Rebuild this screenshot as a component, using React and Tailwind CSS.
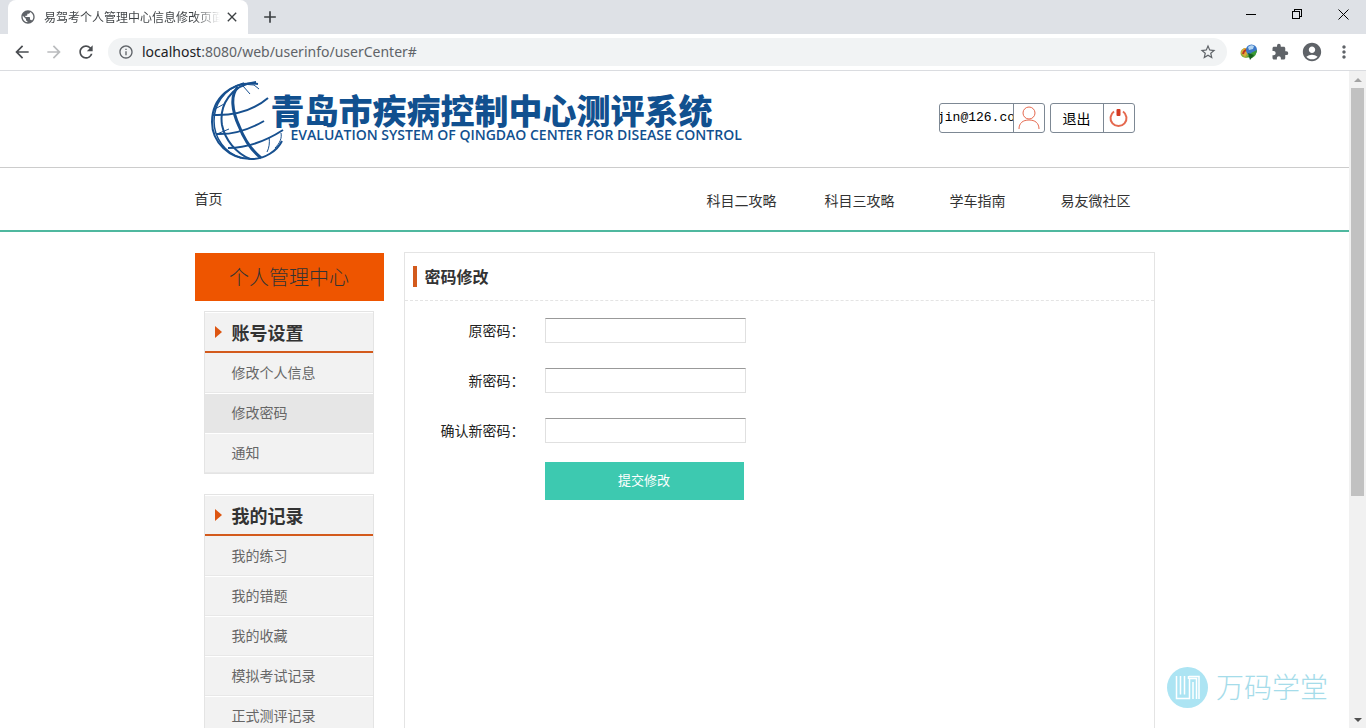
import {
  MdAccountCircle, MdAdd, MdArrowBack, MdArrowForward, MdClose, MdExtension,
  MdInfoOutline, MdMoreVert, MdPublic, MdRefresh, MdStarBorder,
} from 'react-icons/md'

const navLinks = ['科目二攻略', '科目三攻略', '学车指南', '易友微社区']

const menus = [
  { title: '账号设置', items: ['修改个人信息', '修改密码', '通知'], active: '修改密码' },
  { title: '我的记录', items: ['我的练习', '我的错题', '我的收藏', '模拟考试记录', '正式测评记录'] },
]

const fields = [
  { id: 'old-password', label: '原密码：' },
  { id: 'new-password', label: '新密码：' },
  { id: 'confirm-password', label: '确认新密码：' },
]

function TabStrip() {
  return (
    <div className="flex h-[34px] shrink-0 bg-[#dee1e6] pl-2">
      <div className="flex w-60 items-center rounded-t-lg bg-white pl-3 pr-2">
        <MdPublic size={16} className="shrink-0 text-[#5f6368]" />
        <span className="ml-2 w-[176px] overflow-hidden whitespace-nowrap bg-linear-to-r from-[#3c4043] from-85% to-transparent bg-clip-text text-xs text-transparent">
          易驾考个人管理中心信息修改页面
        </span>
        <button aria-label="关闭标签页" className="ml-1 text-[#3c4043]"><MdClose size={16} /></button>
      </div>
      <button aria-label="新标签页" className="ml-3 text-[#3c4043]"><MdAdd size={20} /></button>
      <div className="ml-auto flex h-7 text-black">
        <button aria-label="最小化" className="flex w-[46px] items-center justify-center">
          <svg width="10" height="10" stroke="currentColor" shapeRendering="crispEdges"><path d="M0 5.5h10" /></svg>
        </button>
        <button aria-label="还原" className="flex w-[46px] items-center justify-center">
          <svg width="11" height="11" fill="none" stroke="currentColor" shapeRendering="crispEdges">
            <path d="M.5 2.5h7v7h-7zM2.5 2.5v-2h7v7h-2" />
          </svg>
        </button>
        <button aria-label="关闭" className="flex w-[46px] items-center justify-center">
          <svg width="11" height="11" stroke="currentColor"><path d="M.5.5l10 10M10.5.5l-10 10" /></svg>
        </button>
      </div>
    </div>
  )
}

function DownloadIcon() {
  return (
    <svg width="18" height="16" viewBox="0 0 18 16">
      <ellipse cx="6" cy="9" rx="5.5" ry="5" fill="#8fae3c" />
      <path d="M1 9q1-5 5-5l2 4-3 5z" fill="#e0a83a" />
      <path d="M3 10q1-4 4-4" stroke="#b9341f" strokeWidth="2" fill="none" />
      <circle cx="11.500" cy="6" r="5.500" fill="#3c78c8" />
      <path d="M8 3q3-3 6-1l-1 3-4 1z" fill="#b5d5f0" />
      <path d="M17 6q0 5-5 8l-5-1 4-4z" fill="#3a9a35" />
      <path d="M8 9l6 2-4 5z" fill="#17601f" />
    </svg>
  )
}

function Toolbar() {
  return (
    <div className="flex h-[37px] shrink-0 items-center border-b border-[#dadce0] bg-white pl-3 pr-3 text-[#5f6368]">
      <button aria-label="后退" className="mr-3 text-[#4a4d51]"><MdArrowBack size={20} /></button>
      <button aria-label="前进" className="mr-3 text-[#babcbe]"><MdArrowForward size={20} /></button>
      <button aria-label="重新加载" className="mr-3 text-[#4a4d51]"><MdRefresh size={20} /></button>
      <div className="flex h-7 flex-1 items-center rounded-full bg-[#f1f3f4] px-[10px]">
        <MdInfoOutline size={16} className="shrink-0" />
        <label htmlFor="address" className="ml-2 font-['Noto_Sans'] text-sm text-[#202124]">localhost</label>
        <input
          id="address"
          defaultValue=":8080/web/userinfo/userCenter#"
          className="min-w-0 flex-1 bg-transparent font-['Noto_Sans'] text-sm text-[#5f6368] outline-none"
        />
        <button aria-label="收藏"><MdStarBorder size={18} /></button>
      </div>
      <div className="ml-3 flex items-center gap-[11px]">
        <button aria-label="下载扩展" className="flex w-5 justify-center"><DownloadIcon /></button>
        <button aria-label="扩展程序" className="flex w-5 justify-center"><MdExtension size={18} /></button>
        <button aria-label="用户"><MdAccountCircle size={22} /></button>
        <button aria-label="菜单"><MdMoreVert size={20} /></button>
      </div>
    </div>
  )
}

function Globe() {
  return (
    <svg width="76" height="80" viewBox="0 0 76 80" fill="none" stroke="#17508f" className="shrink-0">
      <path d="M47 3C20-1 1 18 1 41c0 20 17 37 39 37 14 0 26-8 31-18" strokeWidth="2" />
      <path d="M33 2C12 8 3 24 3 40c0 17 11 32 27 37" strokeWidth="1.500" />
      <path d="M45 1C20 4 8 24 11 44c3 15 14 28 28 34" strokeWidth="2" />
      <path d="M27 6c-8 8-6 24 1 39 5 13 12 24 22 32" strokeWidth="3" />
      <path d="M2 34c25 1 42-6 55-17" strokeWidth="2" />
      <path d="M5 53c20 1 36-6 48-13" strokeWidth="2" />
      <path d="M17 67c22 0 41-9 55-18" strokeWidth="2" />
      <path d="M30 3l13 1 5 4M32 5l7 8M4 28l9-5M6 53l12-5M58 56c1 6 0 11-2 15M70 52c1 5-1 10-6 15" strokeWidth="1" />
    </svg>
  )
}

function SiteHeader() {
  return (
    <header className="border-b border-[#ccc]">
      <div className="mx-auto flex h-24 max-w-[960px] items-center justify-between pl-4 pr-5">
        <a href="#" className="flex items-center pt-1">
          <Globe />
          <div className="-ml-4 mb-1 whitespace-nowrap text-[#11508f]">
            <div className="text-[34px] font-black leading-8">青岛市疾病控制中心测评系统</div>
            <div className="ml-5 font-['Open_Sans'] text-sm font-semibold leading-[18px]">
              EVALUATION SYSTEM OF QINGDAO CENTER FOR DISEASE CONTROL
            </div>
          </div>
        </a>
        <div className="flex gap-[5px] pb-0.5">
          <button className="flex h-[30px] w-[106px] rounded-[3px] border border-[#7d8894]">
            <span className="flex h-full flex-1 items-center justify-center overflow-hidden border-r border-[#7d8894] font-['Liberation_Mono'] text-[13px] text-black">
              jin@126.co
            </span>
            <span className="flex h-full w-[30px] shrink-0 items-center justify-center">
              <svg width="22" height="24" viewBox="0 0 22 24" fill="none" stroke="#e5694f">
                <circle cx="11" cy="7" r="6" />
                <path d="M1 23c0-6 4-9 10-9s10 3 10 9" />
              </svg>
            </span>
          </button>
          <button className="flex h-[30px] w-[85px] rounded-[3px] border border-[#7d8894]">
            <span className="flex h-full flex-1 items-center justify-center border-r border-[#7d8894] text-sm text-black">退出</span>
            <span className="flex h-full w-[30px] items-center justify-center">
              <svg width="20" height="20" viewBox="0 0 20 20" fill="none">
                <path d="M5 3.500a8 8 0 1 0 9 0" stroke="#e5694f" strokeWidth="2" />
                <rect x="7.500" y="1" width="4" height="7" rx="1" fill="#d43a22" />
              </svg>
            </span>
          </button>
        </div>
      </div>
    </header>
  )
}

function SiteNav() {
  return (
    <nav className="border-b-2 border-[#4fb89f]">
      <div className="mx-auto flex h-[62px] max-w-[960px] items-center justify-between pb-0.5 text-sm text-[#333]">
        <a href="#">首页</a>
        <ul className="flex pt-1">
          {navLinks.map((link) => (
            <li key={link} className="w-[118px] text-center"><a href="#">{link}</a></li>
          ))}
        </ul>
      </div>
    </nav>
  )
}

function SideMenu({ title, items, active }) {
  return (
    <section className="ml-[9px] w-[170px] border border-[#e4e4e4] bg-[#f2f2f2]">
      <h2 className="flex h-[41px] items-center border-b-2 border-t border-b-[#d35a1c] border-t-white pl-[10px] text-lg font-bold text-[#333]">
        <svg width="7" height="12" className="mr-[10px]"><path d="M0 0l7 6-7 6z" fill="#dd5511" /></svg>
        {title}
      </h2>
      <ul>
        {items.map((item) => (
          <li key={item} className="border-t border-white first:border-[#f2f2f2]">
            <a
              href="#"
              className={`flex h-[39px] items-center border-b pb-0.5 pl-[27px] text-sm text-[#666] ${
                item === active ? 'border-[#e6e6e6] bg-[#e6e6e6]' : 'border-[#e8e8e8]'
              }`}
            >
              {item}
            </a>
          </li>
        ))}
      </ul>
    </section>
  )
}

function PasswordForm() {
  return (
    <section className="min-w-0 flex-1 self-stretch border border-[#e4e4e4]">
      <div className="flex h-12 items-center border-b border-dashed border-[#e4e4e4] pl-2">
        <span className="mr-2 h-[21px] w-1 bg-[#d35a1c]" />
        <h1 className="pb-0.5 font-bold text-[#333]">密码修改</h1>
      </div>
      <form className="pt-[17px]" onSubmit={(e) => e.preventDefault()}>
        {fields.map((f) => (
          <div key={f.id} className="mb-[25px] flex h-[25px] items-center last-of-type:mb-[19px]">
            <label htmlFor={f.id} className="mr-5 w-[120px] pb-0.5 text-right text-sm text-[#222]">{f.label}</label>
            <input
              id={f.id}
              type="password"
              className="h-[25px] w-[201px] border border-[#e0e0e0] border-t-[#999] px-1 text-sm outline-none"
            />
          </div>
        ))}
        <button className="ml-[140px] h-[38px] w-[199px] bg-[#3dc9b0] pb-0.5 text-[13px] text-white">提交修改</button>
      </form>
    </section>
  )
}

function Scrollbar() {
  return (
    <div className="flex w-[17px] shrink-0 flex-col items-center bg-[#f1f1f1]">
      <div className="flex h-[17px] items-center">
        <svg width="8" height="4"><path d="M0 4l4-4 4 4z" fill="#a3a3a3" /></svg>
      </div>
      <div className="h-[408px] w-[13px] bg-[#c1c1c1]" />
      <div className="mt-auto flex h-[17px] items-center">
        <svg width="8" height="4"><path d="M0 0l4 4 4-4z" fill="#505050" /></svg>
      </div>
    </div>
  )
}

function Watermark() {
  return (
    <div className="absolute bottom-5 right-[38px] flex items-center gap-2 text-[#a5dcea]">
      <svg width="41" height="41" viewBox="0 0 41 41">
        <circle cx="20.500" cy="20.500" r="20.500" fill="#ace4f3" />
        <path d="M9.500 9v22.500h13V11.500h7V32M13.500 9v18.500M17.500 9v18.500M21.500 9v3M26 15v17M22 9.500h10V32" fill="none" stroke="#fff" strokeWidth="1.500" />
      </svg>
      <span className="pb-0.5 text-[28px] font-light leading-10">万码学堂</span>
    </div>
  )
}

export default function App() {
  return (
    <div className="relative flex h-screen flex-col overflow-hidden bg-white font-['Noto_Sans_CJK_SC',sans-serif]">
      <TabStrip />
      <Toolbar />
      <div className="flex min-h-0 flex-1">
        <div className="flex min-w-0 flex-1 flex-col overflow-hidden">
          <SiteHeader />
          <SiteNav />
          <main className="mx-auto flex w-full max-w-[960px] flex-1 gap-5 pt-5">
            <aside className="w-[189px] shrink-0 pt-px">
              <div className="mb-[10px] flex h-12 items-center justify-center bg-[#ee5500] text-xl font-light text-[#333]">
                个人管理中心
              </div>
              <div className="flex flex-col gap-5">
                {menus.map((menu) => <SideMenu key={menu.title} {...menu} />)}
              </div>
            </aside>
            <PasswordForm />
          </main>
        </div>
        <Scrollbar />
      </div>
      <Watermark />
    </div>
  )
}
